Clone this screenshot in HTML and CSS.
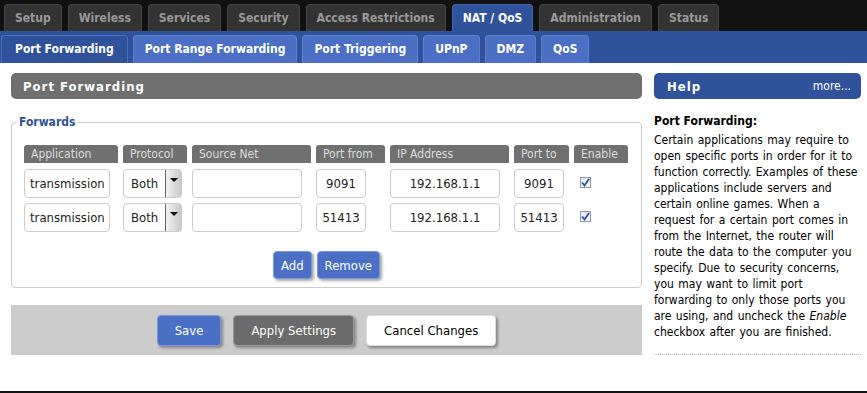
FILE: index.html
```html
<!DOCTYPE html>
<html lang="en">
  <head>
    <meta charset="UTF-8" />
    <meta name="viewport" content="width=device-width, initial-scale=1.0" />
    <title>Port Forwarding</title>
    <link rel="stylesheet" href="styles.css">
  </head>
  <body>
    <div class="main-nav">
      <a class="tab">Setup</a>
      <a class="tab">Wireless</a>
      <a class="tab">Services</a>
      <a class="tab">Security</a>
      <a class="tab">Access Restrictions</a>
      <a class="tab active">NAT / QoS</a>
      <a class="tab">Administration</a>
      <a class="tab">Status</a>
    </div>
    <div class="sub-nav">
      <a class="subtab active">Port Forwarding</a>
      <a class="subtab">Port Range Forwarding</a>
      <a class="subtab">Port Triggering</a>
      <a class="subtab">UPnP</a>
      <a class="subtab">DMZ</a>
      <a class="subtab">QoS</a>
    </div>

    <div class="content">
      <div class="left">
        <h2 class="section-title">Port Forwarding</h2>

        <fieldset class="forwards">
          <legend>Forwards</legend>
          <div class="grid">
            <div class="th">Application</div>
            <div class="th">Protocol</div>
            <div class="th">Source Net</div>
            <div class="th">Port from</div>
            <div class="th">IP Address</div>
            <div class="th">Port to</div>
            <div class="th">Enable</div>

            <div><input class="txt app" value="transmission"></div>
            <div><span class="select">Both<span class="arrow"></span></span></div>
            <div><input class="txt wide" value=""></div>
            <div><input class="txt port" value="9091"></div>
            <div><input class="txt wide center" value="192.168.1.1"></div>
            <div><input class="txt port" value="9091"></div>
            <div><span class="check"><svg width="9" height="9" viewBox="0 0 9 9"><path d="M1 4.5 L3.5 7.5 L8 1" fill="none" stroke="#2a4fa8" stroke-width="1.8"/></svg></span></div>

            <div><input class="txt app" value="transmission"></div>
            <div><span class="select">Both<span class="arrow"></span></span></div>
            <div><input class="txt wide" value=""></div>
            <div><input class="txt port" value="51413"></div>
            <div><input class="txt wide center" value="192.168.1.1"></div>
            <div><input class="txt port" value="51413"></div>
            <div><span class="check"><svg width="9" height="9" viewBox="0 0 9 9"><path d="M1 4.5 L3.5 7.5 L8 1" fill="none" stroke="#2a4fa8" stroke-width="1.8"/></svg></span></div>
          </div>
          <div class="row-buttons">
            <button class="btn btn-blue">Add</button>
            <button class="btn btn-blue">Remove</button>
          </div>
        </fieldset>

        <div class="submit-bar">
          <button class="btn btn-blue big">Save</button>
          <button class="btn btn-gray big">Apply Settings</button>
          <button class="btn btn-white big">Cancel Changes</button>
        </div>
      </div>

      <div class="help">
        <div class="help-title"><span>Help</span><a>more...</a></div>
        <h3>Port Forwarding:</h3>
        <p>Certain applications may require to open specific ports in order for it to function correctly. Examples of these applications include servers and certain online games. When a request for a certain port comes in from the Internet, the router will route the data to the computer you specify. Due to security concerns, you may want to limit port forwarding to only those ports you are using, and uncheck the <em>Enable</em> checkbox after you are finished.</p>
      </div>
    </div>
    <div class="footer"></div>
  </body>
</html>
```

FILE: styles.css
```css
body {
  margin: 0;
  background: #fff;
  font-family: "DejaVu Sans Condensed", "DejaVu Sans", sans-serif;
  font-size: 12px;
  color: #000;
  height: 393px;
  display: flex;
  flex-direction: column;
}

.main-nav {
  background: #111;
  height: 31px;
  display: flex;
  align-items: flex-end;
  gap: 6px;
  padding-left: 4px;
}

.tab {
  height: 26px;
  line-height: 27px;
  padding: 0 10px;
  background: #333;
  border: 1px solid #444;
  border-bottom: none;
  border-radius: 4px 4px 0 0;
  color: #999;
  font-weight: bold;
  font-size: 12px;
}

.tab.active {
  background: #30529a;
  border-color: #4065b0;
  color: #fff;
}

.sub-nav {
  background: #30529a;
  height: 32px;
  display: flex;
  align-items: flex-end;
  gap: 5px;
  padding-left: 1px;
}

.subtab {
  height: 27px;
  line-height: 27px;
  padding: 0 11px;
  background: #4a6fc4;
  border: 1px solid #5b80d2;
  border-bottom: none;
  border-radius: 4px 4px 0 0;
  color: #fff;
  font-weight: bold;
  font-size: 12px;
}

.subtab.active {
  background: #30529a;
  border-color: #4a6fc4;
  padding: 0 13px;
}

.content {
  display: flex;
  gap: 12px;
  padding: 10px 0 0 11px;
  flex: 1;
}

.left {
  width: 631px;
}

.section-title {
  margin: 0;
  height: 26px;
  line-height: 27px;
  background: #6f6f6f;
  border-radius: 5px;
  color: #fff;
  font-size: 13px;
  letter-spacing: 1px;
  padding-left: 12px;
}

.forwards {
  margin: 16px 0 0 0;
  border: 1px solid #ccc;
  border-radius: 4px;
  padding: 16px 0 8px 12px;
}

.forwards legend {
  color: #30529a;
  font-weight: bold;
  font-size: 12px;
  padding: 0 3px;
  margin-left: -8px;
}

.grid {
  display: grid;
  grid-template-columns: 94px 64px 119px 69px 119px 55px 54px;
  column-gap: 5px;
  row-gap: 5px;
}

.th {
  height: 18px;
  line-height: 19px;
  background: #707070;
  color: #ddd;
  border-radius: 3px 3px 0 0;
  padding-left: 7px;
  margin-bottom: 1px;
}

.txt {
  box-sizing: border-box;
  height: 29px;
  border: 1px solid #ccc;
  border-radius: 4px;
  font-family: inherit;
  font-size: 13px;
  color: #222;
  padding: 0 5px;
  background: #fff;
}

.txt.app { width: 86px; }
.txt.wide { width: 110px; }
.txt.port { width: 50px; text-align: center; padding: 0; }
.txt.center { text-align: center; }

.select {
  box-sizing: border-box;
  display: flex;
  align-items: center;
  width: 59px;
  height: 29px;
  border: 1px solid #ccc;
  border-radius: 4px;
  font-size: 13px;
  color: #222;
  padding-left: 7px;
  position: relative;
}

.arrow {
  position: absolute;
  right: 0;
  top: 0;
  width: 15px;
  height: 27px;
  border-left: 1px solid #666;
  background: linear-gradient(to right, #f4f4f4, #c8c8c8);
}

.arrow::after {
  content: "";
  position: absolute;
  left: 4px;
  top: 8px;
  border-left: 4px solid transparent;
  border-right: 4px solid transparent;
  border-top: 4px solid #000;
}

.check {
  box-sizing: border-box;
  display: flex;
  align-items: center;
  justify-content: center;
  width: 11px;
  height: 11px;
  margin: 8px 0 0 6px;
  border: 1px solid #8b9bb3;
  background: linear-gradient(#e4e8ee, #fff);
}

.row-buttons {
  display: flex;
  justify-content: center;
  gap: 5px;
  margin-top: 19px;
  padding-right: 12px;
}

.btn {
  font-family: inherit;
  font-size: 13px;
  height: 28px;
  padding: 0 7px;
  border-radius: 4px;
  cursor: pointer;
  box-shadow: 2px 2px 3px rgba(0, 0, 0, 0.35);
}

.btn-blue {
  background: #4a6fc4;
  border: 1px solid #7a96d8;
  color: #fff;
}

.btn-gray {
  background: #6b6b6b;
  border: 1px solid #999;
  color: #fff;
}

.btn-white {
  background: #fff;
  border: 1px solid #ddd;
  color: #000;
}

.submit-bar {
  margin-top: 17px;
  background: #ccc;
  height: 50px;
  display: flex;
  align-items: center;
  justify-content: center;
  gap: 12px;
}

.btn.big {
  height: 31px;
  padding: 0 17px;
}

.help {
  width: 207px;
}

.help-title {
  height: 26px;
  line-height: 27px;
  background: #30529a;
  border-radius: 5px;
  color: #fff;
  display: flex;
  justify-content: space-between;
  padding: 0 10px 0 13px;
}

.help-title span {
  font-weight: bold;
  font-size: 13px;
  letter-spacing: 1px;
}

.help h3 {
  font-size: 12px;
  margin: 15px 0 4px 0;
}

.help p {
  margin: 0;
  line-height: 16px;
  word-spacing: 1px;
  padding-bottom: 14px;
  border-bottom: 1px dotted #bbb;
}

.footer {
  height: 2px;
  background: #111;
}
```
